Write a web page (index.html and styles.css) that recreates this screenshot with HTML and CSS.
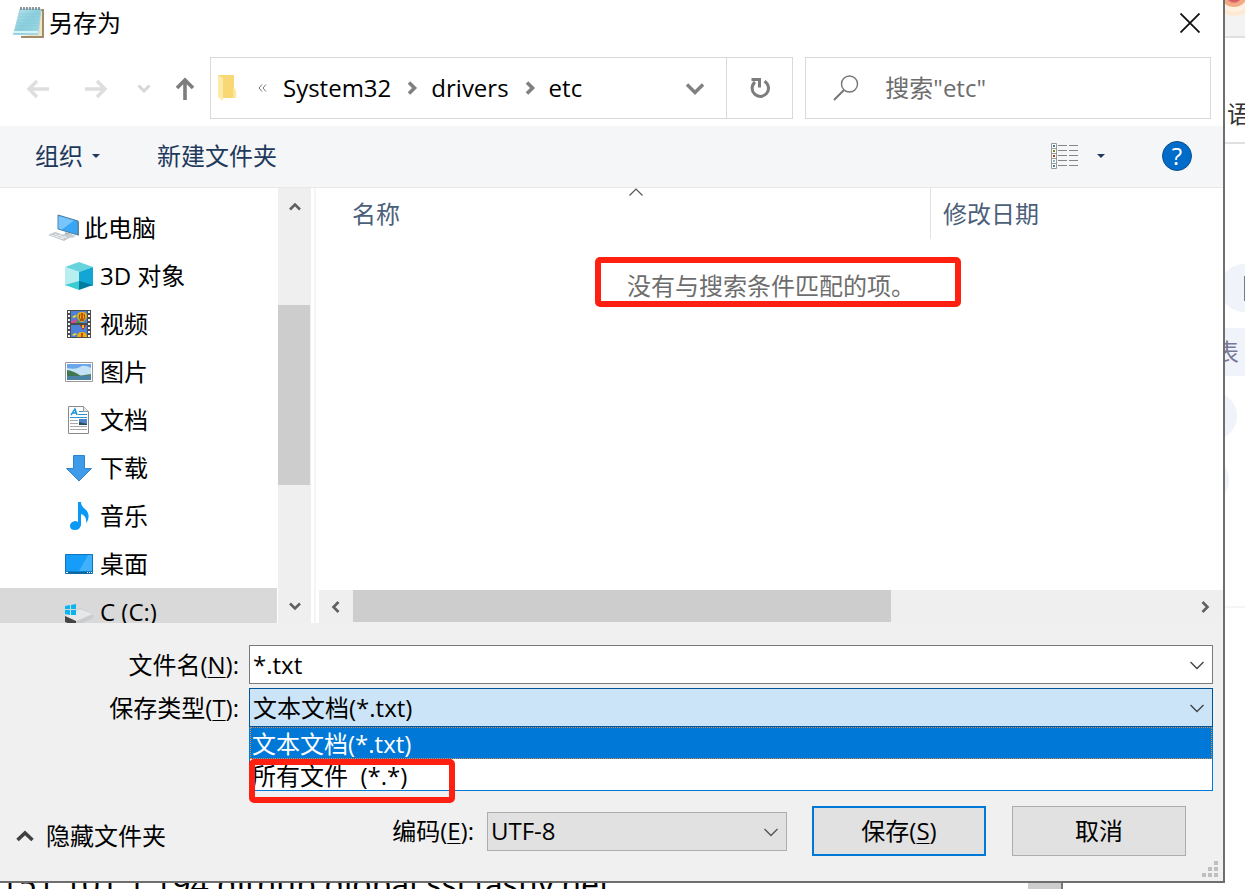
FILE: index.html
```html
<!DOCTYPE html>
<html lang="zh-CN">
<head>
<meta charset="utf-8">
<title>另存为</title>
<link rel="stylesheet" href="styles.css">
</head>
<body>
<div class="screen">
  <main class="dialog">
    <header class="titlebar">
      <svg class="app-icon" width="34" height="34" viewBox="0 0 34 34">
        <defs><linearGradient id="pad" x1="0" y1="0" x2="1" y2="1"><stop offset="0" stop-color="#b9e4ee"/><stop offset=".5" stop-color="#8ccfdd"/><stop offset="1" stop-color="#a5dbe7"/></linearGradient></defs>
        <path d="M29 3h3v29H9v-2h18z" fill="#a08c68"/>
        <path d="M28 5h2v25H8l19-2z" fill="#efe6c8"/>
        <path d="M8 3h21l-3 25.500H1.500z" fill="url(#pad)" stroke="#9ccfda" stroke-width=".8"/>
        <path d="M7 8h21M6.500 11h21M6 14h21M5.500 17h21M5 20h21M4.500 23h21" stroke="#7cc1d1" stroke-width=".5"/>
        <path d="M2 26l24 0" stroke="#d7f3f7" stroke-width="2"/>
        <path d="M9 4V1M12 4V1M15 4V1M18 4V1M21 4V1M24 4V1M27 4V1" stroke="#78828a" stroke-width="1.600"/>
      </svg>
      <h1 class="title">另存为</h1>
      <button class="close" aria-label="关闭"><svg width="20" height="20" viewBox="0 0 20 20"><path d="M.5.5l19 19M19.500.5l-19 19" stroke="#111" stroke-width="1.800"/></svg></button>
    </header>

    <div class="navrow">
      <nav class="history">
        <button class="icon-btn" aria-label="后退"><svg width="24" height="20" viewBox="0 0 24 20"><path d="M23 10H3M11 2L3 10l8 8" fill="none" stroke="#dedede" stroke-width="3.400"/></svg></button>
        <button class="icon-btn" aria-label="前进"><svg width="24" height="20" viewBox="0 0 24 20"><path d="M1 10h20M13 2l8 8-8 8" fill="none" stroke="#dedede" stroke-width="3.400"/></svg></button>
        <button class="icon-btn recent" aria-label="最近位置"><svg width="14" height="10" viewBox="0 0 14 10"><path d="M1.500 1.500L7 7l5.500-5.500" fill="none" stroke="#d6d6d6" stroke-width="3"/></svg></button>
        <button class="icon-btn up" aria-label="上移"><svg width="20" height="24" viewBox="0 0 20 24"><path d="M10 23V3M2 11l8-8 8 8" fill="none" stroke="#7d7d7d" stroke-width="3.600"/></svg></button>
      </nav>
      <div class="address">
        <svg class="folder" width="20" height="28" viewBox="0 0 20 28"><path d="M1 1h16v13l2 3v7H6z" fill="#f8d775"/><path d="M17 14l2 3v7h-3V14z" fill="#ffe69b"/><path d="M1 1l5 3v23l-5-4z" fill="#ffe9a6"/></svg>
        <svg class="more" width="9" height="8" viewBox="0 0 9 8"><path d="M4 .5L1 4l3 3.500M8 .5L5 4l3 3.500" fill="none" stroke="#777"/></svg>
        <a href="#" class="crumb">System32</a>
        <svg class="sep" width="11" height="14" viewBox="0 0 11 14"><path d="M2 1.500L7.500 7 2 12.500" fill="none" stroke="#808080" stroke-width="3.600"/></svg>
        <a href="#" class="crumb">drivers</a>
        <svg class="sep" width="11" height="14" viewBox="0 0 11 14"><path d="M2 1.500L7.500 7 2 12.500" fill="none" stroke="#808080" stroke-width="3.600"/></svg>
        <a href="#" class="crumb">etc</a>
        <button class="icon-btn drop" aria-label="以前的位置"><svg width="20" height="14" viewBox="0 0 20 14"><path d="M2 3.500l8 8 8-8" fill="none" stroke="#808080" stroke-width="3.400"/></svg></button>
        <button class="icon-btn refresh" aria-label="刷新"><svg width="22" height="22" viewBox="0 0 22 22"><path d="M15.500 4.200A8.200 8.200 0 1 1 6 5" fill="none" stroke="#7d7d7d" stroke-width="3"/><path d="M2.500 2.500h8v8" fill="none" stroke="#7d7d7d" stroke-width="3"/></svg></button>
      </div>
      <label class="search">
        <svg width="26" height="26" viewBox="0 0 26 26"><circle cx="16.500" cy="9" r="8" fill="none" stroke="#777" stroke-width="1.400"/><path d="M11 15L1 25" stroke="#777" stroke-width="2"/></svg>
        <input type="text" placeholder='搜索"etc"' aria-label="搜索">
      </label>
    </div>

    <div class="toolbar">
      <button class="tool">组织<span class="tri"></span></button>
      <button class="tool">新建文件夹</button>
      <button class="tool view" aria-label="更改视图">
        <svg width="28" height="26" viewBox="0 0 28 26"><path d="M.5.5h5v25h-5zM.5 5.500h5M.5 10.500h5M.5 15.500h5M.5 20.500h5" fill="#fff" stroke="#999"/><path d="M7 2.500h9M18 2.500h9M7 7.500h9M18 7.500h9M7 12.500h9M18 12.500h9M7 17.500h9M18 17.500h9M7 22.500h9M18 22.500h9" stroke="#858585"/><path d="M2 2h2v2H2zM2 22h2v2H2z" fill="#3c7f9b"/><path d="M2 7h2v2H2z" fill="#6a8b22"/><path d="M2 12h2v2H2z" fill="#b03a12"/><path d="M2 17h2v2H2z" fill="#8bb0cb"/></svg>
        <span class="tri"></span>
      </button>
      <button class="help" aria-label="帮助">?</button>
    </div>

    <div class="content">
      <ul class="tree">
        <li class="root"><svg width="32" height="28" viewBox="0 0 32 28"><path d="M10 1l20 6v14l-20-6z" fill="#39a5f4" stroke="#4c7d9d"/><path d="M10.500 2L26 6.500 14 15.500l-3.500-1z" fill="#77c5fb"/><path d="M30 7l1 1v13l-1 1z" fill="#6c8594"/><path d="M18 18l6 2v3l-8-2z" fill="#a6b4bc"/><path d="M13 21l9-1 6 2-4 2z" fill="#c7d0d5"/><path d="M0 21l7-3 16 5-7 4z" fill="#c1c7cb"/><path d="M3 21l13 4M6 20l13 4M8 23l6-3M12 25l6-3" stroke="#e9edef"/></svg>此电脑</li>
        <li><svg width="28" height="28" viewBox="0 0 28 28"><path d="M14 0l14 5-14 5L0 5z" fill="#66d3dd"/><path d="M0 5l14 5v11L0 24z" fill="#b9eef1"/><path d="M28 5L14 10v11l14 3z" fill="#12a6d5"/><path d="M0 23l14-4v9z" fill="#39cbd2"/><path d="M28 23l-14-4v9z" fill="#007ca0"/></svg>3D 对象</li>
        <li><svg width="28" height="28" viewBox="0 0 28 28"><path d="M2 0h24v28H2z" fill="#4b4b4b"/><path d="M4 1v27M24 1v27" stroke="#f4f4f4" stroke-width="2" stroke-dasharray="2 2"/><path d="M6 1h16v12H6zM6 15h16v12H6z" fill="#4d82d8"/><path d="M17 2q5 0 5 4 0 3-4 6h-2q-4-3-4-6 0-4 5-4z" fill="#e7b011"/><path d="M15 4q-2 3 1 7M19 4q2 3-1 7" fill="none" stroke="#7a4a12"/><path d="M17 3v8" stroke="#c52b17" stroke-width="1.500"/><path d="M6 12l4-3 4 3v1H6z" fill="#dc479a"/><path d="M10 13l3-3 3 3z" fill="#3d9a45"/><path d="M15 15h6l-3 5z" fill="#c22c16"/><path d="M17 15h2v3h-2z" fill="#f2be23"/><path d="M7 7l3-2 2 1-3 2zM7 25l3-2 2 1-3 2z" fill="#efda2a"/><path d="M12 27q0-5 5-5t5 5z" fill="#e7b011"/><path d="M17 23v4" stroke="#c52b17" stroke-width="1.500"/></svg>视频</li>
        <li><svg width="28" height="28" viewBox="0 0 28 28"><path d="M.5 4.500h27v19H.5z" fill="#fff" stroke="#999"/><path d="M2 6h24v16H2z" fill="#6ba6ec"/><path d="M2 10q9 2 13-1t11 1v8H2z" fill="#c4e2f7"/><path d="M2 12q7 1 14 6H2z" fill="#3f7750"/><path d="M13 18l13-2v3z" fill="#52806c"/><path d="M2 18h24v4H2z" fill="#4a82a4"/></svg>图片</li>
        <li><svg width="28" height="28" viewBox="0 0 28 28"><path d="M3.500.5h15l5 5v22h-20z" fill="#fff" stroke="#8a8a8a"/><path d="M18.500.5v5h5" fill="#e8e8e8" stroke="#999"/><path d="M6 9l4-6 2 6M7 7h5" stroke="#2495da" stroke-width="1.500" fill="none"/><path d="M14 5.500h4M13 8.500h9M5 11.500h17" stroke="#2d93d5"/><path d="M5 14.500h8M5 17.500h8M5 20.500h17M5 23.500h17" stroke="#aaa"/><path d="M14 13h8v6h-8z" fill="#4c83c6"/><path d="M14 16l8 2v1h-8z" fill="#244e5a"/></svg>文档</li>
        <li><svg width="28" height="28" viewBox="0 0 28 28"><path d="M8.500 1.500h11v13h7L14 27 1.500 14.500h7z" fill="#3e9be9" stroke="#2d85cf"/></svg>下载</li>
        <li><svg width="28" height="28" viewBox="0 0 28 28"><path d="M13 0h3q0 4 4 7 5 4 3 11l-2 3q1-7-5-9v11q-1 5-6 5-5 0-5-4t5-5q2 0 3 1z" fill="#0a99f5"/></svg>音乐</li>
        <li><svg width="28" height="28" viewBox="0 0 28 28"><path d="M.5 4.500h27v19H.5z" fill="#169df9" stroke="#1474b7"/><path d="M14 21L23 5h4v16z" fill="#40b1fd"/><path d="M1 22.500h26" stroke="#0c649d" stroke-width="2"/><path d="M1 22.500h2M22 22.500h1M24 22.500h1M26 22.500h1" stroke="#fff"/></svg>桌面</li>
        <li class="selected"><svg width="30" height="28" viewBox="0 0 30 28"><path d="M0 18l15-8 13 6v4L11 28 0 24z" fill="#c9cbcc"/><path d="M0 18l15-7 13 5-17 7z" fill="#e6e7e8"/><path d="M0 18l11 5v5L0 24z" fill="#444"/><path d="M8 25h2v2H8z" fill="#4fdd58"/><path d="M0 8l5-1v4H0zM6 7l5-1v5H6zM0 12h5v5l-5-1zM6 12h5v5H6z" fill="#08b5ef"/></svg>C (C:)</li>
      </ul>
      <div class="vscroll">
        <svg width="12" height="9" viewBox="0 0 12 9"><path d="M1 7.500l5-5 5 5" fill="none" stroke="#606060" stroke-width="2.600"/></svg>
        <span class="vthumb"></span>
        <svg width="12" height="9" viewBox="0 0 12 9"><path d="M1 1.500l5 5 5-5" fill="none" stroke="#606060" stroke-width="2.600"/></svg>
      </div>
      <div class="splitter"></div>
      <section class="files">
        <div class="columns">
          <span class="col name">名称<svg class="sort" width="14" height="8" viewBox="0 0 14 8"><path d="M.5 7.500L7 1l6.500 6.500" fill="none" stroke="#555" stroke-width="1.200"/></svg></span>
          <span class="col date">修改日期</span>
        </div>
        <p class="empty">没有与搜索条件匹配的项。</p>
        <div class="hscroll">
          <svg width="9" height="12" viewBox="0 0 9 12"><path d="M7.500 1l-5 5 5 5" fill="none" stroke="#606060" stroke-width="2.600"/></svg>
          <span class="htrack"><span class="hthumb"></span></span>
          <svg width="9" height="12" viewBox="0 0 9 12"><path d="M1.500 1l5 5-5 5" fill="none" stroke="#606060" stroke-width="2.600"/></svg>
        </div>
      </section>
    </div>

    <footer class="footer">
      <div class="form">
        <label for="fname">文件名(<u>N</u>):</label>
        <div class="combo"><input id="fname" type="text" value="*.txt"><svg class="chev" width="14" height="9" viewBox="0 0 14 9"><path d="M.5 1L7 7.500 13.500 1" fill="none" stroke="#444" stroke-width="1.400"/></svg></div>
        <label for="ftype">保存类型(<u>T</u>):</label>
        <div class="combo open"><select id="ftype"><option>文本文档(*.txt)</option><option>所有文件  (*.*)</option></select><svg class="chev" width="14" height="9" viewBox="0 0 14 9"><path d="M.5 1L7 7.500 13.500 1" fill="none" stroke="#444" stroke-width="1.400"/></svg></div>
        <ul class="options" role="listbox" aria-label="保存类型">
          <li role="option" aria-selected="true" class="option active">文本文档(*.txt)</li>
          <li role="option" aria-selected="false" class="option">所有文件&nbsp; (*.*)<span class="mark"></span></li>
        </ul>
      </div>
      <div class="actions">
        <button class="hide"><svg width="18" height="12" viewBox="0 0 18 12"><path d="M1.500 10L9 3l7.500 7" fill="none" stroke="#404040" stroke-width="3.600"/></svg>隐藏文件夹</button>
        <label for="enc">编码(<u>E</u>):</label>
        <div class="combo encoding"><select id="enc"><option>UTF-8</option></select><svg class="chev" width="14" height="9" viewBox="0 0 14 9"><path d="M.5 1L7 7.500 13.500 1" fill="none" stroke="#555" stroke-width="1.400"/></svg></div>
        <button class="btn primary">保存(<u>S</u>)</button>
        <button class="btn">取消</button>
      </div>
      <svg class="grip" width="16" height="16" viewBox="0 0 16 16"><path d="M12 0h4v4h-4zM6 6h4v4H6zM12 6h4v4h-4zM0 12h4v4H0zM6 12h4v4H6zM12 12h4v4h-4z" fill="#bfbfbf"/></svg>
    </footer>
  </main>

  <aside class="behind-side">
    <div class="tabs"><svg width="20" height="16" viewBox="0 0 20 16"><circle cx="9" cy="-6" r="22" fill="#ffe8d2"/><circle cx="9" cy="-6" r="18" fill="#fff1e2"/><circle cx="9" cy="-7" r="14" fill="#f3ab86"/><circle cx="9" cy="-5" r="8" fill="#e57373"/><path d="M5 0q4 2 8 0" fill="none" stroke="#c9545b"/></svg></div>
    <div class="lang">语</div>
    <ul class="pills">
      <li class="pill first"><span class="bar"></span></li>
      <li class="pill second">表</li>
      <li class="pill third"></li>
      <li class="pill fourth"></li>
    </ul>
    <div class="rule"></div>
  </aside>
  <div class="behind-bottom">
    <p class="hosts">151.101.1.194 github.global.ssl.fastly.net</p>
    <span class="behind-thumb"></span>
  </div>
</div>
</body>
</html>
```

FILE: styles.css
```css
* { box-sizing: border-box; }
body, ul, p, h1 { margin: 0; padding: 0; }
ul { list-style: none; }
body, button, input, select {
  font-family: "Open Sans", "Noto Sans CJK SC", sans-serif;
  font-size: 24px;
  line-height: 32px;
  color: #000;
}
button { border: 0; background: none; padding: 0; }
svg { display: block; flex: none; }
.screen {
  display: grid;
  grid-template-columns: 1fr 20px;
  grid-template-rows: 1fr 6px;
  height: 100vh;
  overflow: hidden;
  background: #fff;
}
.dialog {
  display: flex;
  flex-direction: column;
  min-width: 0;
  min-height: 0;
  border-right: 2px solid #6e6e6e;
  border-bottom: 2px solid #6e6e6e;
  background: #fff;
}

.titlebar { display: flex; align-items: center; height: 46px; padding: 0 23px 0 12px; }
.title { margin-left: 3px; font-size: 24px; font-weight: 400; }
.close { margin-left: auto; }

.navrow { display: flex; padding: 11px 12px 7px 0; }
.history { display: flex; align-items: center; width: 210px; padding: 2px 0 0 26px; gap: 34px; }
.recent { margin-left: -5px; }
.up { margin-left: -10px; }
.icon-btn { display: flex; align-items: center; justify-content: center; }
.address { display: flex; flex: 1; align-items: center; height: 62px; border: 1px solid #d9d9d9; padding-left: 6px; }
.more { margin: 0 16px 0 21px; }
.crumb { color: #000; text-decoration: none; }
.sep { margin: 0 13px 0 16px; }
.drop { margin-left: auto; width: 62px; height: 60px; }
.refresh { width: 66px; height: 60px; border-left: 1px solid #d9d9d9; }
.search { display: flex; width: 33.5%; align-items: center; gap: 26px; height: 62px; margin-left: 12px; border: 1px solid #d9d9d9; padding-left: 27px; }
.search input { flex: 1; min-width: 0; border: 0; padding: 0; outline: 0; }
.search input::placeholder { color: #6d6d6d; opacity: 1; }

.toolbar { display: flex; align-items: center; height: 62px; padding: 0 31px 2px 35px; border-bottom: 1px solid #e8e8e8; background: #f5f6f7; }
.tool { display: flex; align-items: center; margin-right: 57px; color: #1e395b; }
.tri { margin-left: 9px; border: 4px solid transparent; border-top-color: #1e395b; border-bottom-width: 0; }
.view { margin-left: auto; }
.view .tri { margin-left: 18px; }
.help { width: 30px; height: 30px; border: 1px solid #0c4f8f; border-radius: 50%; background: #006cc9; color: #fff; line-height: 26px; }

.content { display: flex; flex: 1; min-height: 0; overflow: hidden; }
.tree { width: 277px; padding-top: 16px; overflow: hidden; }
.tree li { display: flex; align-items: center; gap: 7px; height: 48px; padding-left: 65px; white-space: nowrap; }
.tree .root { gap: 4px; padding-left: 48px; }
.tree .selected { background: #d9d9d9; }
.selected svg { margin-right: -2px; }
.vscroll { display: flex; flex-direction: column; align-items: center; width: 33px; margin-left: 1px; padding: 14px 0 12px; background: #efefef; }
.vthumb { flex: none; width: 100%; height: 180px; margin: 94px 0 auto; border-right: 1px solid #efefef; background: #cdcdcd; }
.splitter { width: 5px; margin-right: 3px; border-right: 2px solid #f5f5f5; }
.files { display: flex; flex: 1; flex-direction: column; min-width: 0; }
.columns { display: flex; height: 51px; }
.col { position: relative; padding-top: 10px; color: #4c607a; }
.name { flex: 1; padding-left: 33px; border-right: 1px solid #e2e2e2; }
.date { width: 292px; padding-left: 12px; }
.sort { position: absolute; left: calc(50% + 4px); top: 0; }
.empty { width: 366px; margin: 18px 0 auto 276px; padding: 10px 26px 2px; border: 6px solid #ff2011; border-radius: 5px; color: #6d6d6d; line-height: 26px; white-space: nowrap; }
.hscroll { display: flex; align-items: center; height: 33px; padding: 0 13px 0 12px; background: #efefef; }
.htrack { flex: 1; align-self: stretch; margin: 0 13px; }
.hthumb { display: block; width: 64.4%; height: 32px; background: #cdcdcd; }

.footer { position: relative; padding: 22px 10px 25px 0; background: #f0f0f0; }
.form { display: grid; grid-template-columns: 239px 1fr; column-gap: 10px; row-gap: 4px; }
.form label { align-self: center; text-align: right; }
u { text-decoration-thickness: 1px; text-underline-offset: 3px; }
.combo { position: relative; height: 39px; }
.combo input, .combo select { width: 100%; height: 39px; padding: 0 3px; border: 1px solid #7a7a7a; border-radius: 0; background: #fff; outline: 0; appearance: none; }
.combo.open select { border-color: #005499; background: #cce4f7; }
.chev { position: absolute; right: 9px; top: 16px; pointer-events: none; }
.options { grid-column: 2; margin-top: -4px; border: 1px solid #0078d7; border-top: 0; background: #fff; }
.option { position: relative; height: 32px; padding-left: 2px; line-height: 34px; }
.option + .option { height: 31px; line-height: 34px; }
.option.active { background: #0078d7; color: #fff; outline: 1px dotted #d98b4a; outline-offset: -1px; }
.mark { position: absolute; left: -1px; top: 0; width: 206px; height: 44px; border: 6px solid #ff2011; border-radius: 5px; }
.actions { display: flex; align-items: center; margin-top: 15px; padding-right: 27px; }
.hide { display: flex; align-items: center; gap: 12px; margin: 10px auto 0 16px; }
.encoding { width: 300px; margin: 0 25px 0 13px; }
.encoding select { border-color: #adadad; background: #e1e1e1; }
.btn { width: 174px; height: 50px; border: 1px solid #adadad; background: #e1e1e1; }
.btn.primary { margin-right: 26px; border: 2px solid #0078d7; }
.grip { position: absolute; right: 5px; bottom: 4px; }

.behind-side { min-width: 0; overflow: hidden; }
.tabs { height: 38px; border-bottom: 2px solid #e0e0e0; background: #f3f3f3; }
.lang { height: 106px; padding: 60px 0 0 2px; border-bottom: 2px solid #e0e0e0; color: #333; }
.pills { display: flex; flex-direction: column; gap: 16px; margin-top: 120px; }
.pill { height: 48px; background: #f0f3f9; color: #777799; }
.first { width: 60px; margin-left: -5px; padding: 12px 0 0 24px; border-radius: 24px; }
.bar { display: block; width: 2px; height: 25px; background: #777799; }
.second { width: 43px; margin-left: -10px; padding-top: 8px; border-radius: 10px; }
.third { width: 60px; margin-left: -48px; border-radius: 24px; }
.fourth { width: 60px; margin-left: -56px; border-radius: 24px; }
.rule { height: 2px; margin-top: 102px; background: #f5f5f5; }
.behind-bottom { display: flex; grid-column: 1 / 3; justify-content: space-between; overflow: hidden; padding-right: 182px; }
.hosts { margin: -15px 0 0; font-family: "Noto Sans", sans-serif; font-size: 32px; white-space: nowrap; }
.behind-thumb { width: 35px; border-right: 2px solid #777; background: #cdcdcd; }
```
